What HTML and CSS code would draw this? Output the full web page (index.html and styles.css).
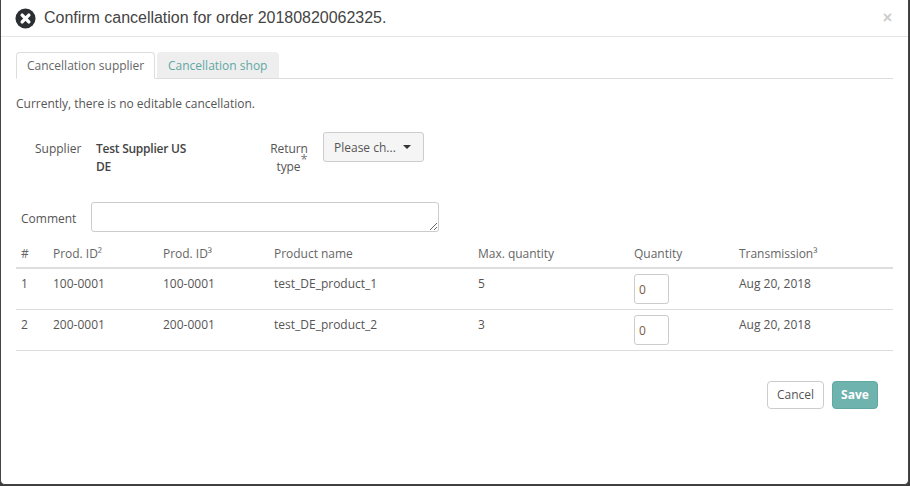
FILE: index.html
```html
<!DOCTYPE html>
<html lang="en">
<head>
<meta charset="utf-8">
<title>Confirm cancellation</title>
<link rel="stylesheet" href="styles.css">
</head>
<body>
<div class="modal">
  <header class="modal-header">
    <svg class="status-icon" viewBox="0 0 22 22" aria-hidden="true">
      <circle cx="11" cy="11" r="10.5" fill="#2b2f33"/>
      <path d="M7.5 7.5l7 7M14.5 7.5l-7 7" stroke="#fff" stroke-width="3.6" stroke-linecap="round"/>
    </svg>
    <h1 class="modal-title">Confirm cancellation for order 20180820062325.</h1>
    <span class="close">×</span>
  </header>
  <div class="modal-body">
    <nav class="tabs">
      <a class="tab tab-active">Cancellation supplier</a>
      <a class="tab tab-idle">Cancellation shop</a>
    </nav>
    <p class="notice">Currently, there is no editable cancellation.</p>
    <div class="form-row">
      <span class="label-supplier">Supplier</span>
      <strong class="supplier-value">Test Supplier US DE</strong>
      <span class="label-return">Return type<sup class="req">*</sup></span>
      <button class="dropdown">Please ch... <i class="caret"></i></button>
    </div>
    <div class="comment-row">
      <label class="label-comment">Comment</label>
      <textarea class="comment"></textarea>
    </div>
    <table class="items">
      <colgroup>
        <col class="c1"><col class="c2"><col class="c3"><col class="c4"><col class="c5"><col class="c6"><col class="c7">
      </colgroup>
      <thead>
        <tr><th>#</th><th>Prod. ID²</th><th>Prod. ID³</th><th>Product name</th><th>Max. quantity</th><th>Quantity</th><th>Transmission³</th></tr>
      </thead>
      <tbody>
        <tr><td>1</td><td>100-0001</td><td>100-0001</td><td>test_DE_product_1</td><td>5</td><td><input class="qty" value="0"></td><td>Aug 20, 2018</td></tr>
        <tr><td>2</td><td>200-0001</td><td>200-0001</td><td>test_DE_product_2</td><td>3</td><td><input class="qty" value="0"></td><td>Aug 20, 2018</td></tr>
      </tbody>
    </table>
    <div class="actions">
      <button class="btn btn-cancel">Cancel</button>
      <button class="btn btn-save">Save</button>
    </div>
  </div>
</div>
</body>
</html>
```
FILE: styles.css
```css
* { box-sizing: border-box; }
html, body { margin: 0; height: 486px; overflow: hidden; background: #3c3c3c; }
body { font: 12px/18px "Open Sans", sans-serif; color: #555; }
.modal {
  width: 909px; height: 485px; background: #fff;
  border: 1px solid #444; border-top: 0;
  border-radius: 0 0 5px 5px;
}
.modal-header {
  display: flex; align-items: center; height: 37px;
  padding: 0 20px 0 14px; border-bottom: 1px solid #e5e5e5;
}
.status-icon { width: 21px; height: 21px; flex: none; margin-right: 8px; }
.modal-title {
  flex: 1; margin: 0; font: 400 16px/20px "Liberation Sans", Arial, sans-serif; color: #444;
  letter-spacing: -0.02px;
}
.close { font: 700 16px/16px "Liberation Sans", Arial, sans-serif; color: #ccc; margin-right: -4px; }
.modal-body { padding: 15px 15px 0; }
.tabs { display: flex; height: 27px; gap: 2px; border-bottom: 1px solid #ddd; }
.tab { height: 27px; padding: 4px 10px; border: 1px solid transparent; border-radius: 4px 4px 0 0; line-height: 18px; white-space: nowrap; }
.tab-active { width: 139px; background: #fff; border-color: #ddd #ddd #fff; color: #666; }
.tab-idle { width: 122px; height: 26px; background: #eee; color: #5ea8a4; }
.notice { margin: 16px 0 0; letter-spacing: -0.01px; }
.form-row { height: 70px; margin-top: 19px; display: flex; align-items: flex-start; }
.label-supplier { margin: 8px 0 0 19px; width: 61px; }
.supplier-value { width: 100px; margin-top: 8px; font-weight: 600; color: #444; line-height: 18px; letter-spacing: -0.25px; }
.label-return { width: 44px; margin: 8px 0 0 71px; text-align: center; line-height: 18px; letter-spacing: -0.1px; }
.req { font-size: 13px; line-height: 0; vertical-align: 7px; margin-right: -6px; color: #777; }
.dropdown {
  width: 101px; height: 30px; margin-left: 12px; padding: 0 10px; text-align: left;
  background: #f5f5f5; border: 1px solid #ccc; border-radius: 3px;
  font: 12px "Open Sans", sans-serif; color: #555;
}
.caret {
  display: inline-block; width: 0; height: 0; margin: 0 0 2px 4px; vertical-align: middle;
  border: 4px solid transparent; border-top-color: #333; border-bottom: 0;
}
.comment-row { display: flex; align-items: flex-start; }
.label-comment { width: 75px; margin: 8px 0 0; padding-left: 5px; }
.comment {
  display: block; width: 348px; height: 30px; margin: 0; border: 1px solid #ccc; border-radius: 3px;
  padding: 4px; font: 12px "Open Sans", sans-serif; background: #fff;
}
.items { width: 877px; margin-top: 9px; border-collapse: collapse; table-layout: fixed; }
.c1 { width: 32px; } .c2 { width: 110px; } .c3 { width: 111px; } .c4 { width: 204px; }
.c5 { width: 156px; } .c6 { width: 105px; } .c7 { width: 159px; }
.items th {
  height: 26px; padding: 4px 5px; text-align: left; font-weight: 400; color: #666;
  border-bottom: 2px solid #ddd; letter-spacing: -0.02px;
}
.items td { height: 41px; padding: 6px 5px 0; vertical-align: top; border-bottom: 1px solid #ddd; color: #555; }
.qty {
  display: block; width: 35px; height: 30px; padding: 5px 4px 4px; margin-top: -1px;
  border: 1px solid #ccc; border-radius: 3px; font: 12px "Open Sans", sans-serif; color: #7d5a3c;
}
.actions { display: flex; justify-content: flex-end; gap: 8px; margin-top: 30px; padding-right: 15px; }
.btn { height: 28px; border-radius: 4px; font: 12px "Open Sans", sans-serif; padding: 0; }
.btn-cancel { width: 57px; background: #fff; border: 1px solid #ccc; color: #555; }
.btn-save { width: 46px; background: #6fb3ae; border: 1px solid #5fa8a3; color: #fff; font-weight: 700; }
```
